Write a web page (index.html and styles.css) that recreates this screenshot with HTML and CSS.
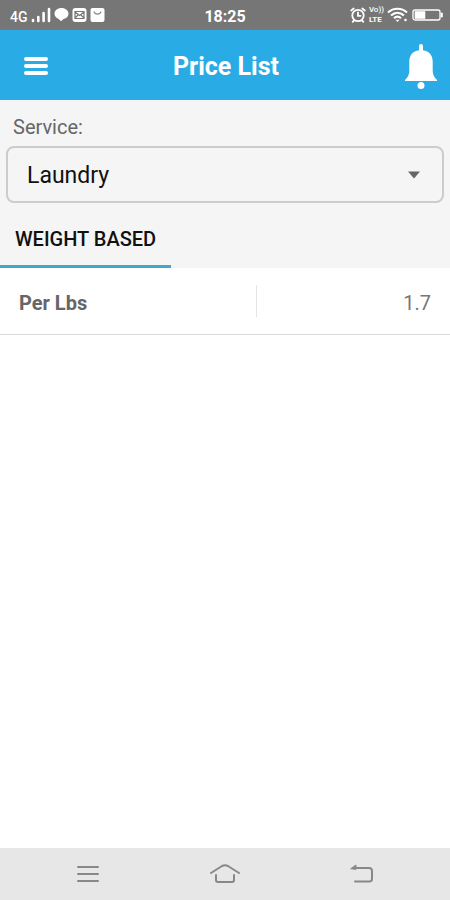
FILE: index.html
```html
<!DOCTYPE html>
<html lang="en">
<head>
<meta charset="utf-8">
<meta name="viewport" content="width=device-width, initial-scale=1">
<title>Price List</title>
<link rel="stylesheet" href="styles.css">
</head>
<body>
<div class="status-bar">
  <div class="status-group">
    <span class="network">4G</span>
    <svg width="20" height="16" viewBox="0 0 20 16" fill="none" stroke="#fff" stroke-width="2.600" stroke-linecap="round"><path d="M2 14v-1M7.300 14v-4M12.600 14V6M18 14V2"/></svg>
    <svg width="15" height="16" viewBox="0 0 15 16" fill="#fff"><path d="M7.500 1C3.500 1 .5 3.500.5 6.700c0 2.600 2 4.600 4.300 5.300L7 14.300 9.500 12c3-.6 5-2.700 5-5.300C14.500 3.500 11.500 1 7.500 1z"/></svg>
    <svg width="15" height="16" viewBox="0 0 15 16"><rect x=".5" y="1" width="14" height="14" rx="3" fill="#fff"/><path d="M3 4.500h9v7H3zM3 5l4.500 3.500L12 5M3 11l3-3M12 11L9 8" fill="none" stroke="#767676" stroke-width="1.200"/></svg>
    <svg width="15" height="16" viewBox="0 0 15 16"><rect x=".5" y="1" width="14" height="14" rx="2" fill="#fff"/><path d="M4 4.500c.5 3.500 6.500 3.500 7 0" fill="none" stroke="#858585" stroke-width="1.200"/></svg>
  </div>
  <span class="clock">18:25</span>
  <div class="status-group status-right">
    <svg width="16" height="16" viewBox="0 0 16 16" fill="none" stroke="#fff" stroke-width="1.800" stroke-linecap="round"><circle cx="8" cy="8.500" r="5.700"/><path d="M8 5.500v3.300h2.500M1.200 3.500l2.500-2M14.800 3.500l-2.500-2M4 13.300l-1.300 1.500M12 13.300l1.300 1.500"/></svg>
    <span class="volte"><span class="vo">Vo))</span><b>LTE</b></span>
    <svg width="22" height="16" viewBox="0 0 22 16" fill="none" stroke="#fff" stroke-width="2.200"><path d="M1 5.500c5.500-5 13.500-5 19 0M4 8.500c4-3.500 9-3.500 13 0M7 11.300c2.200-2 4.800-2 7 0"/><path d="M8.500 12.700h4l-2 2.300z" fill="#fff" stroke="none"/><circle cx="18.500" cy="13" r="1.300" fill="#fff" stroke="none"/></svg>
    <svg width="32" height="16" viewBox="0 0 32 16"><rect x="1" y="3" width="27" height="10" rx="2" fill="none" stroke="#fff" stroke-width="1.300"/><path d="M3 4.500h10v7H3zM29 6h1.500v4H29z" fill="#fff" stroke="#fff" stroke-width=".6"/></svg>
  </div>
</div>
<header class="app-bar">
  <button class="icon-button" type="button" aria-label="Menu">
    <svg width="24" height="20" viewBox="0 0 24 20" fill="none" stroke="#fff" stroke-width="4" stroke-linecap="round"><path d="M2 3h20M2 10h20M2 17h20"/></svg>
  </button>
  <h1>Price List</h1>
  <button class="icon-button bell" type="button" aria-label="Notifications">
    <svg width="34" height="46" viewBox="0 0 34 46" fill="#fff"><path d="M15 3a2 2 0 0 1 4 0v4.200c6.200.8 9.700 5 9.700 11.300v9c0 3.500 1 6.500 4.300 9.500v1H1v-1c3.300-3 4.300-6 4.300-9.500v-9c0-6.300 3.500-10.500 9.700-11.300z"/><circle cx="17" cy="42.500" r="3.500"/></svg>
  </button>
</header>
<main>
  <section class="filters">
    <label for="service">Service:</label>
    <div class="select-box">
      <select id="service"><option>Laundry</option></select>
      <svg class="caret" width="12" height="8" viewBox="0 0 12 8" aria-hidden="true"><path d="M0 .5h12L6 7.500z" fill="#666"/></svg>
    </div>
    <nav class="tabs"><a href="#prices">WEIGHT BASED</a></nav>
  </section>
  <table id="prices">
    <tbody><tr><th scope="row">Per Lbs</th><td>1.7</td></tr></tbody>
  </table>
</main>
<footer class="nav-bar">
  <button type="button" aria-label="Recent apps"><svg width="32" height="22" viewBox="0 0 32 22"><path d="M6 4h20M6 11h20M6 18h20"/></svg></button>
  <button type="button" aria-label="Home"><svg width="32" height="22" viewBox="0 0 32 22"><path d="M2 10l11-7q3-1.500 6 0l11 7M7 12v5q0 2 2 2h14q2 0 2-2v-5"/></svg></button>
  <button type="button" aria-label="Back"><svg width="32" height="22" viewBox="0 0 32 22"><path d="M7 5h16q3 0 3 3v8q0 2.500-3 2.500H9"/><path d="M5 5.500L10 2v4z" fill="#888" stroke-width="1"/></svg></button>
</footer>
</body>
</html>
```
FILE: styles.css
```css
* { box-sizing: border-box; }
body {
  margin: 0;
  min-height: 100vh;
  display: flex;
  flex-direction: column;
  background: #fff;
  color: #666;
  font-family: Roboto, "Liberation Sans", sans-serif;
}
svg { display: block; flex: none; }
button { border: 0; padding: 0; background: none; }
.status-bar {
  display: grid;
  grid-template-columns: 1fr auto 1fr;
  align-items: center;
  height: 30px;
  padding: 0 6px 0 10px;
  background: #767676;
  color: #fff;
}
.status-group { display: flex; align-items: center; gap: 3px; }
.status-right { justify-content: flex-end; }
.network { font-size: 14px; font-weight: 500; line-height: 18px; padding-top: 3px; }
.clock { padding: 3px 4px 0 0; font-size: 16px; font-weight: 700; line-height: 20px; }
.volte { display: flex; flex-direction: column; font-size: 8px; line-height: 10px; }
.vo { font-weight: 500; }
.app-bar {
  display: grid;
  grid-template-columns: 1fr auto 1fr;
  align-items: center;
  height: 70px;
  padding: 2px 12px 0 24px;
  background: #29abe5;
}
.icon-button { justify-self: start; }
.bell { justify-self: end; }
h1 {
  margin: 0;
  padding: 2px 10px 0 0;
  color: #fff;
  font-size: 25px;
  font-weight: 700;
  line-height: 32px;
}
main { flex: 1; }
.filters { background: #f5f5f5; }
label {
  display: block;
  padding: 15px 13px 7px;
  font-size: 20px;
  line-height: 24px;
}
.select-box { position: relative; margin: 0 6px; }
select {
  display: block;
  width: 100%;
  height: 57px;
  padding: 2px 40px 0 19px;
  border: 2px solid #ccc;
  border-radius: 8px;
  appearance: none;
  background: transparent;
  color: #111;
  font: 23px/28px Roboto, "Liberation Sans", sans-serif;
}
.caret { position: absolute; top: 25px; right: 24px; pointer-events: none; }
.tabs { display: flex; padding-top: 9px; }
.tabs a {
  padding: 15px 15px 14px;
  border-bottom: 3px solid #42a7cc;
  color: #111;
  font-size: 20px;
  font-weight: 500;
  line-height: 24px;
  text-decoration: none;
}
table { width: 100%; border-collapse: collapse; }
tr { height: 66px; border-bottom: 1px solid #d9d9d9; }
th, td { padding: 13px 19px 8px; font-size: 20px; line-height: 32px; }
th {
  width: 57%;
  color: #666;
  font-weight: 700;
  text-align: left;
  background: linear-gradient(#e5e5e5, #e5e5e5) right center / 1px 32px no-repeat;
}
td { color: #777; text-align: right; }
.nav-bar {
  display: flex;
  align-items: center;
  justify-content: center;
  gap: 105px;
  height: 52px;
  background: #e7e7e7;
}
.nav-bar svg { fill: none; stroke: #888; stroke-width: 2; stroke-linecap: round; }
```
